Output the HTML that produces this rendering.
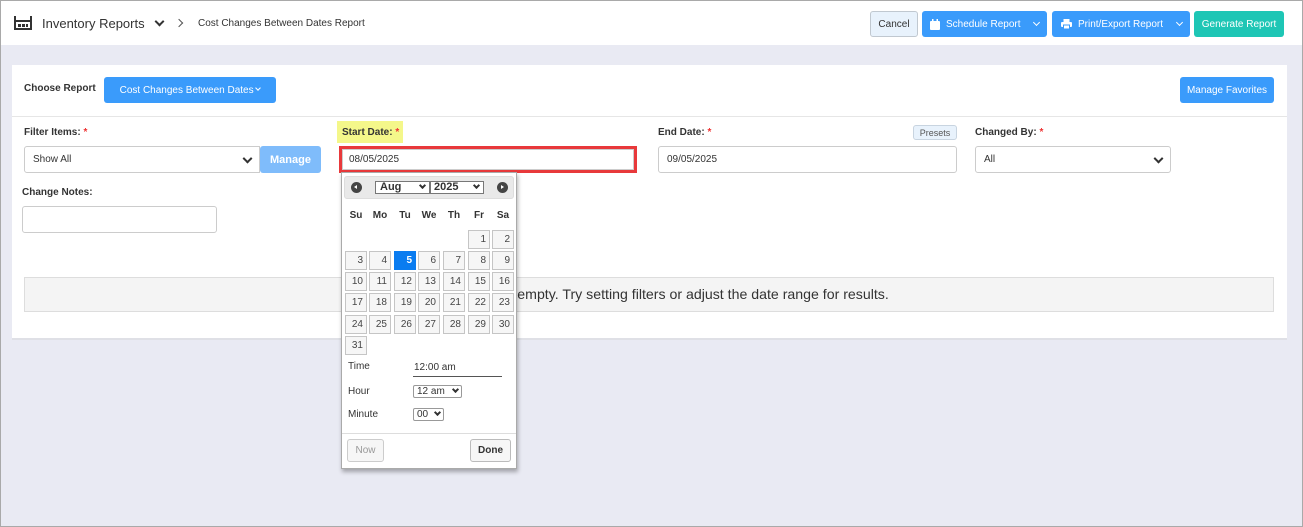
<!DOCTYPE html>
<html><head><meta charset="utf-8"><style>
*{box-sizing:border-box;margin:0;padding:0}
body{width:1303px;height:527px;font-family:"Liberation Sans",Arial,sans-serif;background:#e9eaf3;position:relative;overflow:hidden;border:1px solid #a9a9a9;color:#333}
.a{position:absolute}
.hdr{left:0;top:0;width:1301px;height:44px;background:#fff}
.btn{position:absolute;border-radius:3px;font-size:10px;color:#fff;display:flex;align-items:center;justify-content:center}
.blue{background:#3a9bfb}
.lbl{font-size:11px;font-weight:bold;color:#333}
.req{color:#e33}
.inp{position:absolute;border:1px solid #ccc;border-radius:3px;background:#fff;font-size:10px;color:#333;padding-left:8px;display:flex;align-items:center}
.chev{position:absolute;right:8px;top:50%;width:7px;height:7px;border-right:2px solid #333;border-bottom:2px solid #333;transform:translateY(-70%) rotate(45deg)}
.cell{position:absolute;width:22px;height:19px;border:1px solid #c5c5c5;background:#f6f6f6;font-size:10px;color:#454545;text-align:right;padding:3px 3px 0 0}
.dn{position:absolute;font-size:10px;font-weight:bold;color:#333;width:22px;text-align:center;top:209px}
</style></head><body>
<div class="a hdr"></div>
<svg class="a" style="left:13px;top:15px" width="18" height="14" viewBox="0 0 18 14"><path d="M1 0v14M17 0v14M1 5h16M1 13h16" stroke="#333" stroke-width="2" fill="none"/><rect x="4" y="8" width="3" height="3" fill="#333"/><rect x="8" y="8" width="3" height="3" fill="#333"/><rect x="12" y="8" width="2" height="3" fill="#333"/></svg>
<div class="a" style="left:41px;top:15px;font-size:13px;color:#333">Inventory Reports</div>
<div class="a" style="left:155px;top:17px;width:7px;height:7px;border-right:2px solid #333;border-bottom:2px solid #333;transform:rotate(45deg)"></div>
<div class="a" style="left:175px;top:19px;width:6px;height:6px;border-right:1.5px solid #555;border-top:1.5px solid #555;transform:rotate(45deg)"></div>
<div class="a" style="left:197px;top:17px;font-size:10px;color:#333">Cost Changes Between Dates Report</div>
<div class="btn" style="left:869px;top:10px;width:48px;height:26px;background:#e8f2fc;border:1px solid #c0c8d0;color:#333">Cancel</div>
<div class="btn blue" style="left:921px;top:10px;width:125px;height:26px;justify-content:flex-start;padding-left:8px"><svg width="10" height="11" viewBox="0 0 10 11"><rect x="0" y="2" width="10" height="9" rx="1" fill="#fff"/><rect x="2" y="0" width="1.5" height="3" fill="#fff"/><rect x="6.5" y="0" width="1.5" height="3" fill="#fff"/></svg><span style="margin-left:6px">Schedule Report</span><span style="position:absolute;right:8px;top:9px;width:5px;height:5px;border-right:1.5px solid #fff;border-bottom:1.5px solid #fff;transform:rotate(45deg)"></span></div>
<div class="btn blue" style="left:1051px;top:10px;width:138px;height:26px;justify-content:flex-start;padding-left:9px"><svg width="11" height="10" viewBox="0 0 11 10"><rect x="2.5" y="0" width="6" height="3" fill="#fff"/><rect x="0" y="3" width="11" height="5" rx="1" fill="#fff"/><rect x="2.5" y="6" width="6" height="4" fill="#fff" stroke="#3a9bfb" stroke-width="1"/></svg><span style="margin-left:6px">Print/Export Report</span><span style="position:absolute;right:8px;top:9px;width:5px;height:5px;border-right:1.5px solid #fff;border-bottom:1.5px solid #fff;transform:rotate(45deg)"></span></div>
<div class="btn" style="left:1193px;top:10px;width:90px;height:26px;background:#1ec6b5">Generate Report</div>

<div class="a" style="left:11px;top:64px;width:1275px;height:275px;background:#fff;border-bottom:2px solid #dfe0e6"></div>
<div class="a" style="left:11px;top:115px;width:1275px;height:1px;background:#e6e6e6"></div>
<div class="a lbl" style="left:23px;top:82px;font-size:10px">Choose Report</div>
<div class="btn blue" style="left:103px;top:76px;width:172px;height:26px">Cost Changes Between Dates&nbsp;<span style="display:inline-block;width:4px;height:4px;border-right:1px solid #fff;border-bottom:1px solid #fff;transform:translateY(-2px) rotate(45deg)"></span></div>
<div class="btn blue" style="left:1179px;top:76px;width:94px;height:26px;font-size:10px">Manage Favorites</div>

<div class="a lbl" style="left:23px;top:126px;font-size:10px">Filter Items: <span class="req">*</span></div>
<div class="inp" style="left:23px;top:145px;width:236px;height:27px;border-radius:3px 0 0 3px">Show All<span class="chev"></span></div>
<div class="btn" style="left:259px;top:145px;width:61px;height:27px;background:#7fbcfb;font-weight:bold;font-size:11px">Manage</div>

<div class="a" style="left:336px;top:120px;width:66px;height:22px;background:#f4f78a"></div>
<div class="a lbl" style="left:341px;top:126px;font-size:10px">Start Date: <span class="req">*</span></div>
<div class="a" style="left:338px;top:145px;width:298px;height:27px;border:3px solid #e8393b"></div>
<div class="inp" style="left:341px;top:148px;width:292px;height:21px;border-radius:0;padding-left:6px">08/05/2025</div>

<div class="a lbl" style="left:657px;top:126px;font-size:10px">End Date: <span class="req">*</span></div>
<div class="btn" style="left:912px;top:124px;width:44px;height:15px;background:#e8f2fc;border:1px solid #c8d4e0;color:#555;font-size:9px">Presets</div>
<div class="inp" style="left:657px;top:145px;width:299px;height:27px">09/05/2025</div>
<div class="a lbl" style="left:974px;top:126px;font-size:10px">Changed By: <span class="req">*</span></div>
<div class="inp" style="left:974px;top:145px;width:196px;height:27px">All<span class="chev"></span></div>

<div class="a lbl" style="left:21px;top:186px;font-size:10px">Change Notes:</div>
<div class="inp" style="left:21px;top:205px;width:195px;height:27px"></div>

<div class="a" style="left:23px;top:276px;width:1250px;height:35px;background:#f4f4f4;border:1px solid #ddd;font-size:14.15px;color:#333;line-height:33px;padding-left:409px;white-space:nowrap">The report is empty. Try setting filters or adjust the date range for results.</div>

<div class="a" style="left:340px;top:171px;width:176px;height:297px;background:#fff;border:1px solid #aaa;box-shadow:1px 3px 4px rgba(0,0,0,.3)"></div>
<div class="a" style="left:343px;top:175px;width:170px;height:23px;background:#e9e9e9;border:1px solid #ddd;border-radius:3px"></div>
<div class="a" style="left:350px;top:181px;width:11px;height:11px;border-radius:50%;background:#444"></div>
<div class="a" style="left:353px;top:184px;width:0;height:0;border:2.5px solid transparent;border-right:3px solid #fff;border-left:0"></div>
<div class="a" style="left:496px;top:181px;width:11px;height:11px;border-radius:50%;background:#444"></div>
<div class="a" style="left:500px;top:184px;width:0;height:0;border:2.5px solid transparent;border-left:3px solid #fff;border-right:0"></div>
<div class="a" style="left:374px;top:180px;width:55px;height:13px;border:1px solid #777;background:#fff;font-size:11px;font-weight:bold;padding-left:4px;line-height:11px">Aug<span style="position:absolute;right:4px;top:1px;width:5px;height:5px;border-right:2px solid #333;border-bottom:2px solid #333;transform:rotate(45deg)"></span></div>
<div class="a" style="left:429px;top:180px;width:54px;height:13px;border:1px solid #777;background:#fff;font-size:11px;font-weight:bold;padding-left:3px;line-height:11px">2025<span style="position:absolute;right:4px;top:1px;width:5px;height:5px;border-right:2px solid #333;border-bottom:2px solid #333;transform:rotate(45deg)"></span></div>
<div class="dn" style="left:344px">Su</div><div class="dn" style="left:368px">Mo</div><div class="dn" style="left:393px">Tu</div><div class="dn" style="left:417px">We</div><div class="dn" style="left:442px">Th</div><div class="dn" style="left:467px">Fr</div><div class="dn" style="left:491px">Sa</div>
<div id="cal"></div>
<script>
var xs=[344,368,393,417,442,467,491],ys=[229,250,271,292,314,335],h='',d=1,c=5;
for(var r=0;r<6&&d<=31;r++){for(;c<7&&d<=31;c++){var sel=d==5?'background:#0a7cf0;color:#fff;font-weight:bold;border-color:#0a7cf0;':'';h+='<div class="cell" style="left:'+xs[c]+'px;top:'+ys[r]+'px;'+sel+'">'+d+'</div>';d++;}c=0;}
document.getElementById('cal').innerHTML=h;
</script>
<div class="a" style="left:347px;top:360px;font-size:10px">Time</div>
<div class="a" style="left:413px;top:361px;font-size:10px">12:00 am</div>
<div class="a" style="left:412px;top:375px;width:89px;height:1px;background:#555"></div>
<div class="a" style="left:347px;top:385px;font-size:10px">Hour</div>
<div class="a" style="left:412px;top:384px;width:49px;height:13px;border:1px solid #999;border-radius:2px;font-size:10px;padding-left:3px;line-height:11px">12 am<span style="position:absolute;right:3px;top:1px;width:5px;height:5px;border-right:2px solid #333;border-bottom:2px solid #333;transform:rotate(45deg)"></span></div>
<div class="a" style="left:347px;top:408px;font-size:10px">Minute</div>
<div class="a" style="left:412px;top:407px;width:31px;height:13px;border:1px solid #999;border-radius:2px;font-size:10px;padding-left:3px;line-height:11px">00<span style="position:absolute;right:3px;top:1px;width:5px;height:5px;border-right:2px solid #333;border-bottom:2px solid #333;transform:rotate(45deg)"></span></div>
<div class="a" style="left:341px;top:432px;width:174px;height:1px;background:#ddd"></div>
<div class="btn" style="left:346px;top:438px;width:37px;height:23px;border:1px solid #ccc;background:#f6f6f6;color:#999;font-size:10px">Now</div>
<div class="btn" style="left:469px;top:438px;width:41px;height:23px;border:1px solid #bbb;background:#f6f6f6;color:#333;font-weight:bold;font-size:10px">Done</div>
</body></html>
